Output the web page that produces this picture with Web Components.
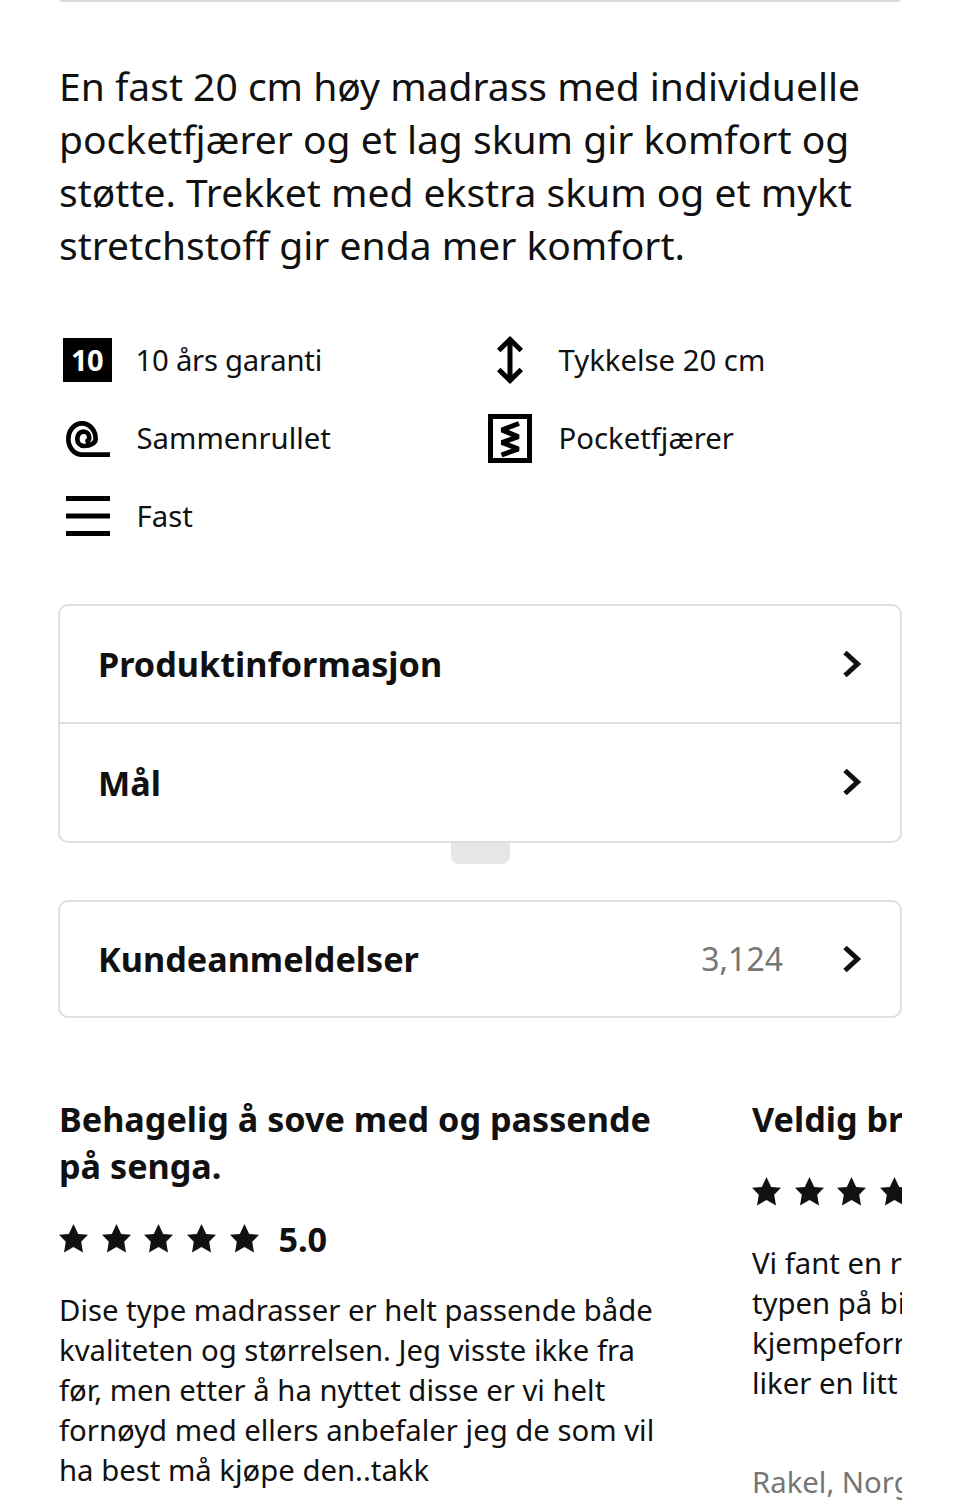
<!DOCTYPE html>
<html lang="no">
<head>
<meta charset="utf-8">
<title>Madrass</title>
<style>
html,body{margin:0;padding:0;background:#fff;height:1507px;overflow:hidden}
body{font-family:"Noto Sans","Open Sans",sans-serif;color:#111}
</style>
</head>
<body>
<product-page>
  <feature-item tight label="10 års garanti"><svg width="49" height="44" viewBox="0 0 49 44"><rect width="49" height="44" fill="#000"/><text x="24" y="32.5" text-anchor="middle" fill="#fff" font-family="Noto Sans" font-weight="700" font-size="29" letter-spacing="-.5">10</text></svg></feature-item>
  <feature-item label="Tykkelse 20 cm"><svg width="30" height="50" viewBox="0 0 30 50"><path d="M15 4.500V45.500M3.700 15.500L15 4.500L26.300 15.500M3.700 34.500L15 45.500L26.300 34.500" fill="none" stroke="#000" stroke-width="5"/></svg></feature-item>
  <feature-item label="Sammenrullet"><svg width="44" height="38" viewBox="0 0 44 38"><path d="M44 35.700H16A13.650 15.700 0 1 1 29.650 20C29.650 24 24.500 27 18 27C14 27 11.300 24 11.300 20C11.300 15.500 14 12.700 17.500 12.700C21 12.700 23.300 15.500 23.300 18.500C23.300 21 21.500 22.500 19.500 23" fill="none" stroke="#000" stroke-width="4.700"/></svg></feature-item>
  <feature-item label="Pocketfjærer"><svg width="44" height="49" viewBox="0 0 44 49"><rect x="2.500" y="2.500" width="39" height="44" fill="none" stroke="#000" stroke-width="5"/><path d="M31 9.500L13.800 16L30.500 22.700L13.800 28.500L30.500 35L13.500 41" fill="none" stroke="#000" stroke-width="5" stroke-linejoin="bevel"/></svg></feature-item>
  <feature-item label="Fast"><svg width="44" height="40" viewBox="0 0 44 40"><path d="M0 2.500H44M0 20H44M0 37.500H44" fill="none" stroke="#000" stroke-width="5"/></svg></feature-item>
</product-page>
<script>
const chevron='<svg width="20" height="30" viewBox="0 0 20 30"><path d="M3 3.500L15.500 15L3 26.500" fill="none" stroke="#111" stroke-width="5"/></svg>';
const star='<svg width="29" height="29" viewBox="0 0 29 29"><path d="M14.500 0L19.200 10L29 10.800L22.200 17.800L24 28.500L14.500 23L5 28.500L6.800 17.800L0 10.800L9.800 10Z" fill="#111"/></svg>';

class FeatureItem extends HTMLElement{
  constructor(){
    super();
    this.attachShadow({mode:'open'}).innerHTML=`<style>
      :host{display:flex;align-items:center;gap:20px;height:78px;font-size:29.3px;color:#111}
      :host([tight]) .l{letter-spacing:-.25px;margin-left:-1px}
      .ic{width:58px;display:flex;justify-content:center;align-items:center}
      ::slotted(svg){display:block}
    </style><span class="ic"><slot></slot></span><span class="l">${this.getAttribute('label')}</span>`;
  }
}
class InfoRow extends HTMLElement{
  constructor(){
    super();
    const c=this.getAttribute('count');
    this.attachShadow({mode:'open'}).innerHTML=`<style>
      :host{display:flex;align-items:center;height:117px;padding:0 38px;font-size:34.2px;font-weight:700;color:#111}
      :host([first]){height:116px}
      :host([compact]){height:114px}
      .t{flex:1}
      .c{font-size:32px;font-weight:400;color:#767676;margin-right:59px}
      svg{display:block}
    </style><span class="t">${this.getAttribute('label')}</span>${c?`<span class="c">${c}</span>`:''}${chevron}`;
  }
}
class InfoCard extends HTMLElement{
  constructor(){
    super();
    this.attachShadow({mode:'open'}).innerHTML=`<style>
      :host{display:block;border:2px solid #dfdfdf;border-radius:10px;background:#fff}
      ::slotted(info-row:not(:last-child)){border-bottom:2px solid #dfdfdf}
    </style><slot></slot>`;
  }
}
class StarRow extends HTMLElement{
  constructor(){
    super();
    this.attachShadow({mode:'open'}).innerHTML=`<style>
      :host{display:flex;align-items:center;gap:13.7px;height:29px;margin-top:35px}
      svg{display:block;flex:none}
    </style>${star.repeat(5)}<slot></slot>`;
  }
}
class ReviewCard extends HTMLElement{
  constructor(){
    super();
    this.attachShadow({mode:'open'}).innerHTML=`<style>
      :host{display:block;flex:none;width:620px;color:#111}
      h3{margin:0;font-size:34.2px;line-height:47px;font-weight:700}
      .rate{font-size:34.2px;font-weight:700;margin-left:6px;line-height:29px}
      .body{margin-top:37px;font-size:29.3px;line-height:40px}
      .author{margin-top:59px;font-size:29.3px;line-height:40px;color:#767676;white-space:nowrap}
    </style><h3>${this.getAttribute('heading')}</h3>
    <star-row>${this.hasAttribute('score')?`<span class="rate">${this.getAttribute('score')}</span>`:''}</star-row>
    <div class="body"><slot></slot></div>
    ${this.hasAttribute('author')?`<div class="author">${this.getAttribute('author')}</div>`:''}`;
  }
}
class ProductPage extends HTMLElement{
  constructor(){
    super();
    this.attachShadow({mode:'open'}).innerHTML=`<style>
      :host{display:block;padding:0 58px}
      .top{height:0;border-bottom:2.500px solid #dcdcdc;border-radius:0 0 8px 8px;margin:0 2px}
      p{margin:56.500px 0 0 1px;font-size:39px;line-height:53.33px;color:#111}
      .features{display:grid;grid-template-columns:422px 422px;margin:49.500px 0 48.500px .5px}
      .handle{width:59px;height:21px;margin:0 auto 36px;background:#e6e6e8;border-radius:0 0 8px 8px}
      .reviews{display:flex;gap:73px;margin-top:77px;padding-left:1px;overflow:hidden}
      .clip{white-space:nowrap}
    </style>
    <div class="top"></div>
    <p>En fast 20 cm høy madrass med individuelle pocketfjærer og et lag skum gir komfort og støtte. Trekket med ekstra skum og et mykt stretchstoff gir enda mer komfort.</p>
    <div class="features"><slot></slot></div>
    <info-card><info-row first label="Produktinformasjon"></info-row><info-row label="Mål"></info-row></info-card>
    <div class="handle"></div>
    <info-card><info-row compact label="Kundeanmeldelser" count="3,124"></info-row></info-card>
    <div class="reviews">
      <review-card heading="Behagelig å sove med og passende på senga." score="5.0">Dise type madrasser er helt passende både kvaliteten og størrelsen. Jeg visste ikke fra før, men etter å ha nyttet disse er vi helt fornøyd med ellers anbefaler jeg de som vil ha best må kjøpe den..takk</review-card>
      <review-card heading="Veldig bra" author="Rakel, Norge"><span class="clip">Vi fant en r<br>typen på bi<br>kjempeforr<br>liker en litt</span></review-card>
    </div>`;
  }
}
customElements.define('feature-item',FeatureItem);
customElements.define('info-row',InfoRow);
customElements.define('info-card',InfoCard);
customElements.define('star-row',StarRow);
customElements.define('review-card',ReviewCard);
customElements.define('product-page',ProductPage);
</script>
</body>
</html>
